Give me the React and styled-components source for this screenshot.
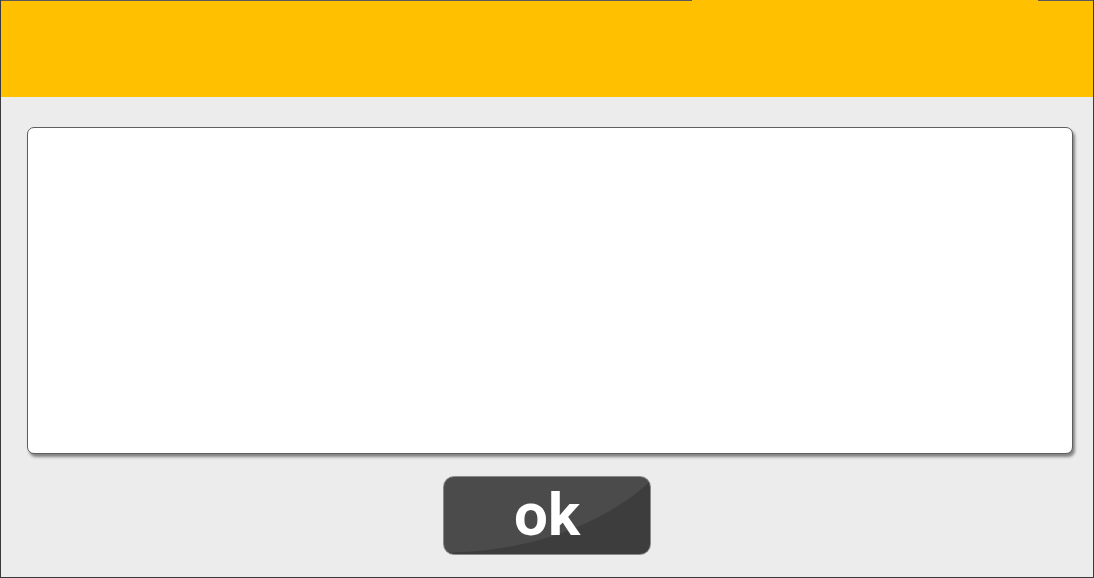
import React from "react";
import styled, { createGlobalStyle } from "styled-components";

const GlobalStyle = createGlobalStyle`
  html, body {
    margin: 0;
    padding: 0;
    background: #ececec;
  }
  body {
    font-family: Roboto, "Liberation Sans", sans-serif;
  }
`;

const Frame = styled.div`
  width: 1094px;
  height: 578px;
  box-sizing: border-box;
  display: flex;
  flex-direction: column;
  border: 1px solid #3a3a3a;
  border-top: none;
  background: #ececec;
`;

const Header = styled.header`
  height: 97px;
  background: #ffc000;
  display: flex;
  flex-direction: column;
`;

const TopEdge = styled.div`
  display: flex;
  height: 1px;
`;

const EdgePart = styled.div`
  background: ${(p) => (p.$open ? "#ffc000" : "#5a5a5a")};
  width: ${(p) => (p.$w ? `${p.$w}px` : "auto")};
  flex: ${(p) => (p.$w ? "none" : "1")};
`;

const Body = styled.main`
  flex: 1;
  display: flex;
  flex-direction: column;
  align-items: center;
  padding: 30px 20px 0 26px;
  gap: 22px;
`;

const Card = styled.section`
  align-self: stretch;
  height: 327px;
  box-sizing: border-box;
  background: #ffffff;
  border: 1px solid #5e5e5e;
  border-radius: 7px;
  box-shadow: 2px 3px 3px rgba(0, 0, 0, 0.45);
`;

const OkButton = styled.button`
  width: 208px;
  height: 79px;
  margin-right: 6px;
  box-sizing: border-box;
  border: 1px solid #8a8a8a;
  border-radius: 11px;
  background: radial-gradient(
    ellipse 257px 176px at 0px -100px,
    #4b4b4b 99.4%,
    #3d3d3d 100%
  );
  color: #ffffff;
  font-family: Roboto, "Liberation Sans", sans-serif;
  font-weight: 700;
  font-size: 60px;
  line-height: 1;
  padding: 0 0 2px;
  cursor: pointer;
`;

export default function App() {
  return (
    <>
      <GlobalStyle />
      <Frame>
        <Header>
          <TopEdge>
            <EdgePart $w={691} />
            <EdgePart $w={346} $open />
            <EdgePart />
          </TopEdge>
        </Header>
        <Body>
          <Card />
          <OkButton>ok</OkButton>
        </Body>
      </Frame>
    </>
  );
}
